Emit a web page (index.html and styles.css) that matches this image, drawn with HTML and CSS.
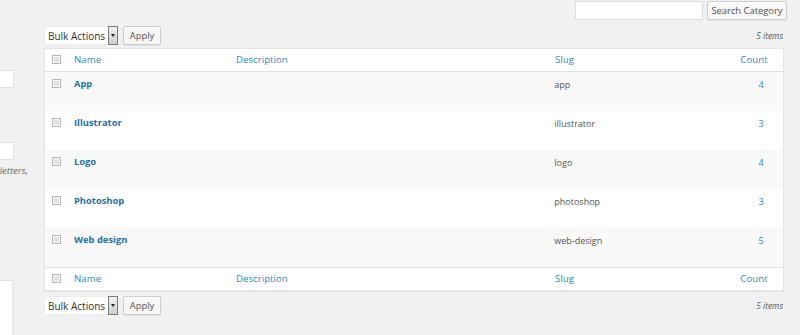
FILE: index.html
```html
<!DOCTYPE html>
<html lang="en">
<head>
  <meta charset="UTF-8" />
  <title>Categories</title>
  <link rel="stylesheet" href="styles.css">
</head>
<body>

<div class="wrap">
  <!-- Add new category form (clipped) -->
  <div class="col-left">
    <div class="field first"><span class="input"></span></div>
    <div class="field second"><span class="input"></span></div>
    <p class="help">The “slug” is the URL-friendly version of the name. It is usually all lowercase and contains only letters,</p>
    <div class="field third"><span class="textarea"></span></div>
  </div>

  <!-- Category list -->
  <div class="col-right">
    <div class="search-box">
      <span class="search-input"></span>
      <button class="btn search-btn">Search Category</button>
    </div>

    <div class="tablenav">
      <div class="actions">
        <div class="select">Bulk Actions<span class="arrow"></span></div>
        <button class="btn">Apply</button>
      </div>
      <span class="num">5 items</span>
    </div>

    <div class="list">
      <div class="row head">
        <span class="cb"><i class="check"></i></span>
        <span class="name">Name</span>
        <span class="desc">Description</span>
        <span class="slug">Slug</span>
        <span class="count">Count</span>
      </div>
      <div class="row item alt">
        <span class="cb"><i class="check"></i></span>
        <span class="name">App</span>
        <span class="desc"></span>
        <span class="slug">app</span>
        <span class="count">4</span>
      </div>
      <div class="row item">
        <span class="cb"><i class="check"></i></span>
        <span class="name">Illustrator</span>
        <span class="desc"></span>
        <span class="slug">illustrator</span>
        <span class="count">3</span>
      </div>
      <div class="row item alt">
        <span class="cb"><i class="check"></i></span>
        <span class="name">Logo</span>
        <span class="desc"></span>
        <span class="slug">logo</span>
        <span class="count">4</span>
      </div>
      <div class="row item">
        <span class="cb"><i class="check"></i></span>
        <span class="name">Photoshop</span>
        <span class="desc"></span>
        <span class="slug">photoshop</span>
        <span class="count">3</span>
      </div>
      <div class="row item alt">
        <span class="cb"><i class="check"></i></span>
        <span class="name">Web design</span>
        <span class="desc"></span>
        <span class="slug">web-design</span>
        <span class="count">5</span>
      </div>
      <div class="row head foot">
        <span class="cb"><i class="check"></i></span>
        <span class="name">Name</span>
        <span class="desc">Description</span>
        <span class="slug">Slug</span>
        <span class="count">Count</span>
      </div>
    </div>

    <div class="tablenav bottom">
      <div class="actions">
        <div class="select">Bulk Actions<span class="arrow"></span></div>
        <button class="btn">Apply</button>
      </div>
      <span class="num">5 items</span>
    </div>
  </div>
</div>

</body>
</html>
```

FILE: styles.css
```css
body {
  margin: 0;
  background: #f1f1f1;
  font-family: "Open Sans", "DejaVu Sans", sans-serif;
  color: #444;
  height: 335px;
  overflow: hidden;
}

.wrap {
  display: flex;
  gap: 14px;
}

/* left column */
.col-left {
  width: 30px;
  overflow: hidden;
  display: flex;
  flex-direction: column;
  align-items: flex-end;
}

.field {
  display: flex;
  justify-content: flex-end;
  width: 100%;
}

.field.first { margin-top: 70px; }
.field.second { margin-top: 54px; }
.field.third { margin-top: 103px; }

.input {
  display: block;
  width: 40px;
  height: 16px;
  margin-right: 16px;
  background: #fff;
  border: 1px solid #e2e2e2;
  flex-shrink: 0;
}

.textarea {
  display: block;
  width: 40px;
  height: 80px;
  margin-right: 17px;
  background: #fff;
  border: 1px solid #e2e2e2;
  flex-shrink: 0;
}

.help {
  margin: 5px 2px 0 0;
  width: 100%;
  display: flex;
  justify-content: flex-end;
  white-space: nowrap;
  font-size: 9.5px;
  font-style: italic;
  color: #666;
  line-height: 12px;
}

/* right column */
.col-right {
  width: 744px;
}

.search-box {
  display: flex;
  justify-content: flex-end;
  gap: 4px;
  margin-top: 1px;
  height: 19px;
  padding-right: 1px;
}

.search-input {
  width: 126px;
  height: 17px;
  background: #fff;
  border: 1px solid #ddd;
}

.btn {
  font-family: "Open Sans", "DejaVu Sans", sans-serif;
  font-size: 9.4px;
  color: #555;
  background: #f7f7f7;
  border: 1px solid #ccc;
  border-radius: 2px;
  padding: 0 6px;
  height: 19px;
  box-shadow: inset 0 1px 0 #fff, 0 1px 0 rgba(0,0,0,.06);
}

.search-btn {
  width: 80px;
  padding: 0;
}

.tablenav {
  display: flex;
  justify-content: space-between;
  align-items: center;
  margin-top: 6px;
  height: 19px;
  padding-right: 5px;
}

.tablenav.bottom {
  margin-top: 5px;
}

.actions {
  display: flex;
  gap: 5px;
}

.actions .btn {
  width: 38px;
  padding: 0;
}

.select {
  display: flex;
  align-items: center;
  width: 70px;
  height: 19px;
  padding-left: 4px;
  background: #fff;
  font-size: 10px;
  color: #333;
  box-shadow: 0 0 0 1px #ececec inset;
  position: relative;
}

.arrow {
  position: absolute;
  right: 0;
  top: 0;
  width: 8px;
  height: 17px;
  border: 1px solid #7a7a7a;
  background: linear-gradient(#f2f2f2, #cdcdcd);
}

.arrow::after {
  content: "";
  position: absolute;
  left: 1.5px;
  top: 7px;
  border-left: 2.5px solid transparent;
  border-right: 2.5px solid transparent;
  border-top: 3px solid #222;
}

.num {
  font-size: 8.4px;
  font-style: italic;
  color: #555;
}

/* list table */
.list {
  margin-top: 3px;
  width: 738px;
  background: #fff;
  border: 1px solid #e5e5e5;
  box-shadow: 0 1px 1px rgba(0,0,0,.04);
}

.row {
  display: flex;
  align-items: flex-start;
  font-size: 9.7px;
}

.row.head {
  height: 22px;
  align-items: center;
  border-bottom: 1px solid #e1e1e1;
}

.row.head span {
  color: #2e8ac6;
  margin-top: -1px;
}

.row.foot {
  border-bottom: none;
  border-top: 1px solid #e1e1e1;
}

.row.item {
  height: 39px;
  background: #fff;
}

.row.item.alt {
  background: #f9f9f9;
}

.row.item span {
  margin-top: 5px;
}

.cb {
  width: 22px;
  padding-left: 7px;
}

.check {
  display: block;
  width: 7px;
  height: 7px;
  border: 1px solid #b7b7b7;
  background: #e2e2e2;
  box-shadow: inset 0 0 0 1px #f8f8f8;
}

.row.item .cb {
  margin-top: 7px !important;
}

.name {
  width: 162px;
}

.row.item .name {
  font-size: 9.4px;
  font-weight: 700;
  color: #1f6fa8;
}

.desc {
  width: 319px;
}

.slug {
  width: 177px;
}

.row.item .slug {
  font-size: 9px;
  color: #555;
  margin-top: 6px !important;
}

.count {
  width: 44px;
  text-align: center;
}

.row.item .count {
  font-size: 9px;
  color: #2e8ac6;
  padding-left: 8px;
  margin-top: 6px !important;
}
```
